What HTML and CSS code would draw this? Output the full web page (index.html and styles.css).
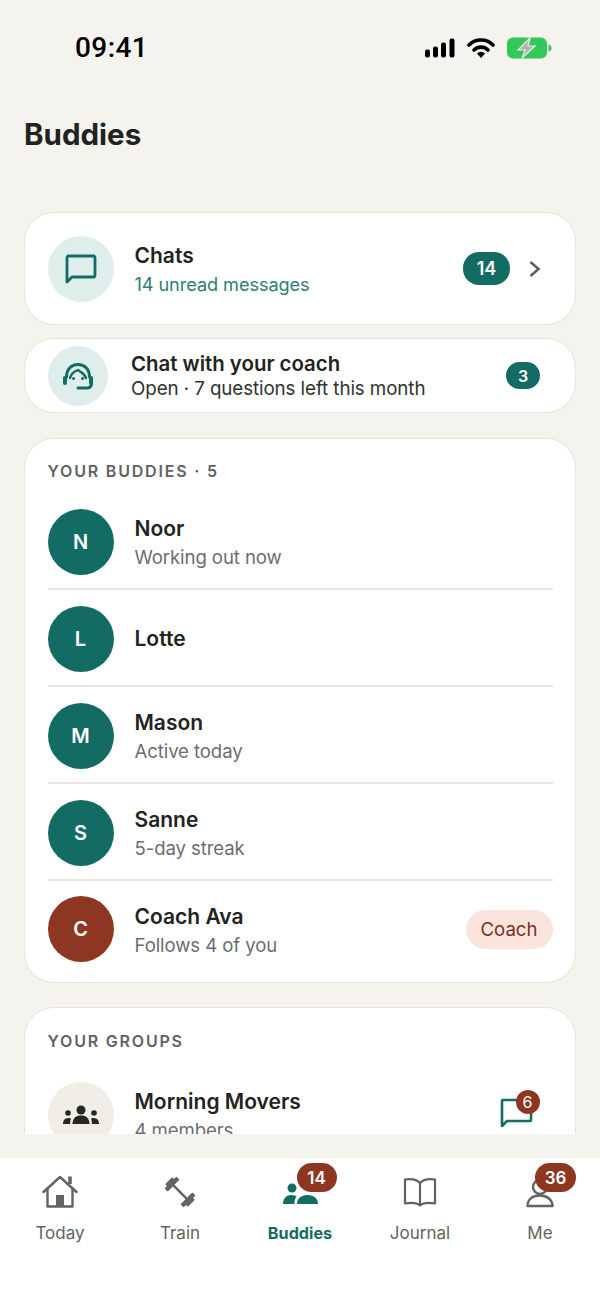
FILE: index.html
```html
<!DOCTYPE html>
<html lang="en">
<head>
<meta charset="utf-8">
<title>Buddies</title>
<link rel="stylesheet" href="styles.css">
</head>
<body>
<div class="app">
  <div class="status">
    <span class="time">09:41</span>
    <div class="status-icons">
      <svg width="32" height="22" viewBox="0 0 32 22"><rect x="1" y="12.500" width="5" height="8" rx="2"/><rect x="9" y="9.500" width="5" height="11" rx="2"/><rect x="17" y="5.500" width="5" height="15" rx="2"/><rect x="25.500" y="1.500" width="5" height="19" rx="2"/></svg>
      <svg width="28" height="22" viewBox="0 0 28 22"><path d="M2 8 A17 17 0 0 1 26 8" fill="none" stroke="#000" stroke-width="3.600" stroke-linecap="round"/><path d="M7 13 A10 10 0 0 1 21 13" fill="none" stroke="#000" stroke-width="3.600" stroke-linecap="round"/><path d="M10 16.500 A5.500 5.500 0 0 1 18 16.500 L14 21 Z"/></svg>
      <svg width="46" height="22" viewBox="0 0 46 22"><rect x="1" y="0.500" width="40" height="21" rx="6" fill="#34c759"/><path d="M42.500 7.500 C45 8 45.500 9.500 45.500 11 C45.500 12.500 45 14 42.500 14.500 Z" fill="#34c759"/><path d="M24 1 L12 13 H19 L16 21 L29 9 H22 Z" fill="#aeb5ae" stroke="#e6f3e6" stroke-width="1.200"/></svg>
    </div>
  </div>
  <h1 class="title">Buddies</h1>
  <main class="scroll">
    <section class="card chats">
      <div class="ava ava-pale ava-66">
        <svg width="34" height="34" viewBox="0 0 34 34" fill="none" stroke="#136c63" stroke-width="2.800" stroke-linejoin="round"><path d="M3 5.500 A1.500 1.500 0 0 1 4.500 4 H29.500 A1.500 1.500 0 0 1 31 5.500 V23.500 A1.500 1.500 0 0 1 29.500 25 H8 L3 30 Z"/></svg>
      </div>
      <div class="txt">
        <div class="name">Chats</div>
        <div class="sub sub-teal">14 unread messages</div>
      </div>
      <span class="pill pill-lg">14</span>
      <svg class="chev" width="14" height="18" viewBox="0 0 14 18" fill="none" stroke="#5d625e" stroke-width="2.600"><path d="M2.500 2 L10.500 9 L2.500 16"/></svg>
    </section>
    <section class="card coach">
      <div class="ava ava-pale ava-60">
        <svg width="32" height="32" viewBox="0 0 32 32" fill="none" stroke="#136c63" stroke-width="3" stroke-linecap="round"><path d="M4.500 17 C4.500 9 9.500 4.500 16 4.500 C22.500 4.500 27.500 9 27.500 17"/><path d="M8 18 C9 14 12 11.500 16 10 C19 12.500 22.500 13.500 24 18" stroke-width="2.400"/><rect x="1" y="16" width="4" height="9" rx="2" fill="#136c63" stroke="none"/><rect x="27" y="16" width="4" height="9" rx="2" fill="#136c63" stroke="none"/><path d="M29.500 24 C29 27 27.500 28 25 28 H16"/><circle cx="11.500" cy="18.500" r="1.500" fill="#136c63" stroke="none"/><circle cx="20.500" cy="18.500" r="1.500" fill="#136c63" stroke="none"/></svg>
      </div>
      <div class="txt coach-txt">
        <div class="name name-sm">Chat with your coach</div>
        <div class="sub sub-dark">Open · 7 questions left this month</div>
      </div>
      <span class="pill pill-sm">3</span>
    </section>
    <section class="card list">
      <div class="label">YOUR BUDDIES · 5</div>
      <div class="row"><div class="ava ava-teal ava-66">N</div><div class="txt"><div class="name">Noor</div><div class="sub">Working out now</div></div></div>
      <div class="row"><div class="ava ava-teal ava-66">L</div><div class="txt"><div class="name">Lotte</div></div></div>
      <div class="row"><div class="ava ava-teal ava-66">M</div><div class="txt"><div class="name">Mason</div><div class="sub">Active today</div></div></div>
      <div class="row"><div class="ava ava-teal ava-66">S</div><div class="txt"><div class="name">Sanne</div><div class="sub">5-day streak</div></div></div>
      <div class="row row-last"><div class="ava ava-rust ava-66">C</div><div class="txt"><div class="name">Coach Ava</div><div class="sub">Follows 4 of you</div></div><span class="tag">Coach</span></div>
    </section>
    <section class="card list groups">
      <div class="label label-groups">YOUR GROUPS</div>
      <div class="row row-last">
        <div class="ava ava-sand ava-66">
          <svg width="38" height="22" viewBox="0 0 38 22" fill="#232825"><circle cx="19" cy="6" r="4.500"/><path d="M10.500 20 C10.500 14 14 11.500 19 11.500 C24 11.500 27.500 14 27.500 20 Z"/><circle cx="6" cy="9" r="2.800"/><path d="M1 20 C1 16 3 14 7 14 L9 14.500 C8.500 16 8 18 8 20 Z"/><circle cx="32" cy="9" r="2.800"/><path d="M37 20 C37 16 35 14 31 14 L29 14.500 C29.500 16 30 18 30 20 Z"/></svg>
        </div>
        <div class="txt"><div class="name">Morning Movers</div><div class="sub">4 members</div></div>
        <div class="group-chat">
          <svg width="34" height="30" viewBox="0 0 34 30" fill="none" stroke="#136c63" stroke-width="2.600" stroke-linejoin="round"><path d="M2 4 A1 1 0 0 1 3 3 H30 A1 1 0 0 1 31 4 V23 A1 1 0 0 1 30 24 H7 L2 29 Z"/></svg>
          <span class="dot">6</span>
        </div>
      </div>
    </section>
  </main>
  <nav class="tabs">
    <div class="tab">
      <span class="tab-ico">
        <svg width="36" height="34" viewBox="0 0 36 34" fill="none" stroke="#5f6561" stroke-width="2.400" stroke-linejoin="round" stroke-linecap="round"><path d="M1.500 17 L18 2 L34.500 17"/><path d="M5.500 13.500 V31.500 H30.500 V13.500"/><path d="M28 9 V1.500" stroke-width="3.500" stroke-linecap="butt"/><rect x="14" y="20" width="8" height="11.500" fill="#5f6561" stroke="none"/></svg>
      </span>
      <span class="tab-label">Today</span>
    </div>
    <div class="tab">
      <span class="tab-ico">
        <svg width="32" height="34" viewBox="0 0 32 34" fill="#5f6561"><g transform="rotate(45 16 17)"><rect x="6" y="15.800" width="20" height="2.400"/><rect x="2.500" y="8.500" width="4.500" height="17" rx="1"/><rect x="0" y="12" width="3" height="10" rx="1"/><rect x="25" y="8.500" width="4.500" height="17" rx="1"/><rect x="29" y="12" width="3" height="10" rx="1"/></g></svg>
      </span>
      <span class="tab-label">Train</span>
    </div>
    <div class="tab tab-on">
      <span class="tab-ico">
        <svg width="36" height="34" viewBox="0 0 36 34" fill="#136c63"><circle cx="10" cy="13" r="4.500"/><path d="M1 29 C1 23 5 20 9 20 C11 20 13 20.500 14.500 21.500 C13 23.500 12.500 26 12.500 29 Z"/><circle cx="25.500" cy="11" r="5"/><path d="M15 29 C15 23.500 19 20 25.500 20 C32 20 36 23.500 36 29 Z"/></svg>
        <span class="badge badge-b">14</span>
      </span>
      <span class="tab-label">Buddies</span>
    </div>
    <div class="tab">
      <span class="tab-ico">
        <svg width="34" height="30" viewBox="0 0 34 30" fill="none" stroke="#5f6561" stroke-width="2.200" stroke-linejoin="round"><path d="M17 6 C14 2.500 8 1.500 2 2.500 V26.500 C8 25.500 14 26 17 28.500 C20 26 26 25.500 32 26.500 V2.500 C26 1.500 20 2.500 17 6 Z"/><path d="M17 6 V28"/></svg>
      </span>
      <span class="tab-label">Journal</span>
    </div>
    <div class="tab">
      <span class="tab-ico">
        <svg width="30" height="34" viewBox="0 0 30 34" fill="none" stroke="#5f6561" stroke-width="2.400" stroke-linejoin="round"><circle cx="15" cy="12" r="7"/><path d="M2.500 31 C2.500 24 8 20.500 15 20.500 C22 20.500 27.500 25 27.500 31 Z"/></svg>
        <span class="badge badge-m">36</span>
      </span>
      <span class="tab-label">Me</span>
    </div>
  </nav>
</div>
</body>
</html>
```
FILE: styles.css
```css
* { box-sizing: border-box; }
html, body { margin: 0; padding: 0; }
body { font-family: Inter, "Liberation Sans", sans-serif; background: #f4f3ee; color: #1f2321; }
.app { width: 600px; height: 1304px; display: flex; flex-direction: column; background: #f4f3ee; overflow: hidden; }
.status { height: 96px; padding: 32px 48px 0 75px; display: flex; justify-content: space-between; align-items: flex-start; flex: none; }
.time { font-family: Roboto, "Liberation Sans", sans-serif; font-size: 28px; line-height: 32px; font-weight: 500; color: #000; letter-spacing: .4px; }
.status-icons { display: flex; align-items: center; gap: 11px; margin-top: 5px; }
.title { margin: 20px 0 0 24px; font-size: 29.500px; line-height: 36px; font-weight: 700; color: #1f2321; flex: none; height: 96px; }
.scroll { flex: 1; min-height: 0; padding: 0 24px; overflow: hidden; display: flex; flex-direction: column; gap: 13px; }
.card { background: #fff; border: 1.500px solid #e6e4da; border-radius: 30px; flex: none; }
.chats { height: 113px; display: flex; align-items: center; padding: 0 33px 0 22.500px; }
.coach { height: 75px; display: flex; align-items: center; padding: 0 35px 0 22.500px; }
.list { padding: 0 22.500px; margin-top: 12px; height: 545px; }
.groups { margin-top: 11px; height: 300px; }
.label { height: 54px; padding-top: 21px; font-size: 16px; line-height: 22px; font-weight: 600; letter-spacing: 1.800px; color: #5e6360; }
.label-groups { padding-top: 22px; margin-bottom: 4px; }
.row { height: 97px; padding-top: 2px; display: flex; align-items: center; border-bottom: 2px solid #e6e5e0; }
.row-last { border-bottom: 0; height: 96px; padding-top: 0; }
.groups .row-last { height: 97px; }
.ava { border-radius: 50%; display: flex; align-items: center; justify-content: center; flex: none; font-size: 20px; font-weight: 600; color: #fff; }
.ava-66 { width: 66px; height: 66px; }
.ava-60 { width: 60px; height: 60px; }
.ava-pale { background: #e0eeeb; }
.ava-teal { background: #136c63; }
.ava-rust { background: #8d3722; }
.ava-sand { background: #f0eee6; }
.txt { margin-left: 21px; flex: 1; min-width: 0; }
.coach-txt { margin-left: 23.500px; }
.name { font-size: 21px; line-height: 28px; font-weight: 600; color: #1f2321; }
.name:not(:only-child) { margin-top: 3px; }
.sub { font-size: 18.600px; line-height: 28px; color: #6a6f6c; letter-spacing: -.1px; }
.sub-teal { color: #2d7f73; font-size: 18.200px; }
.name-sm { font-size: 20.400px; line-height: 25px; }
.name-sm:not(:only-child) { margin-top: 1px; }
.sub-dark { color: #2f3431; font-size: 18.800px; line-height: 26px; }
.pill { background: #136c63; color: #fff; display: flex; align-items: center; justify-content: center; font-weight: 600; border-radius: 16px; }
.pill-lg { width: 47px; height: 33px; font-size: 18px; margin-right: 18px; }
.pill-sm { width: 34px; height: 27px; font-size: 16px; }
.chev { flex: none; }
.tag { background: #fae4dc; color: #7a2e1c; border-radius: 20px; height: 39px; width: 87px; display: flex; align-items: center; justify-content: center; font-size: 18.600px; }
.group-chat { position: relative; width: 34px; height: 30px; margin: 0 18.500px 5px 0; flex: none; }
.dot { position: absolute; top: -7.500px; right: -5.500px; width: 24px; height: 24px; border-radius: 50%; background: #8d3722; color: #fff; font-size: 16px; display: flex; align-items: center; justify-content: center; }
.tabs { flex: none; height: 146px; margin-top: 24px; background: #fff; display: flex; padding-top: 16px; align-items: flex-start; }
.tab { width: 120px; display: flex; flex-direction: column; align-items: center; gap: 11px; }
.tab-ico { position: relative; height: 36px; display: flex; align-items: center; justify-content: center; }
.tab-label { font-size: 17px; line-height: 24px; color: #5f6561; }
.tab-on .tab-label { color: #136c63; font-weight: 700; font-size: 16.200px; }
.badge { position: absolute; background: #8d3722; color: #fff; font-size: 17px; font-weight: 600; border-radius: 15px; height: 29px; width: 40px; display: flex; align-items: center; justify-content: center; top: -11px; }
.badge-b { left: 14.500px; }
.badge-m { left: 10px; width: 41px; }
```
